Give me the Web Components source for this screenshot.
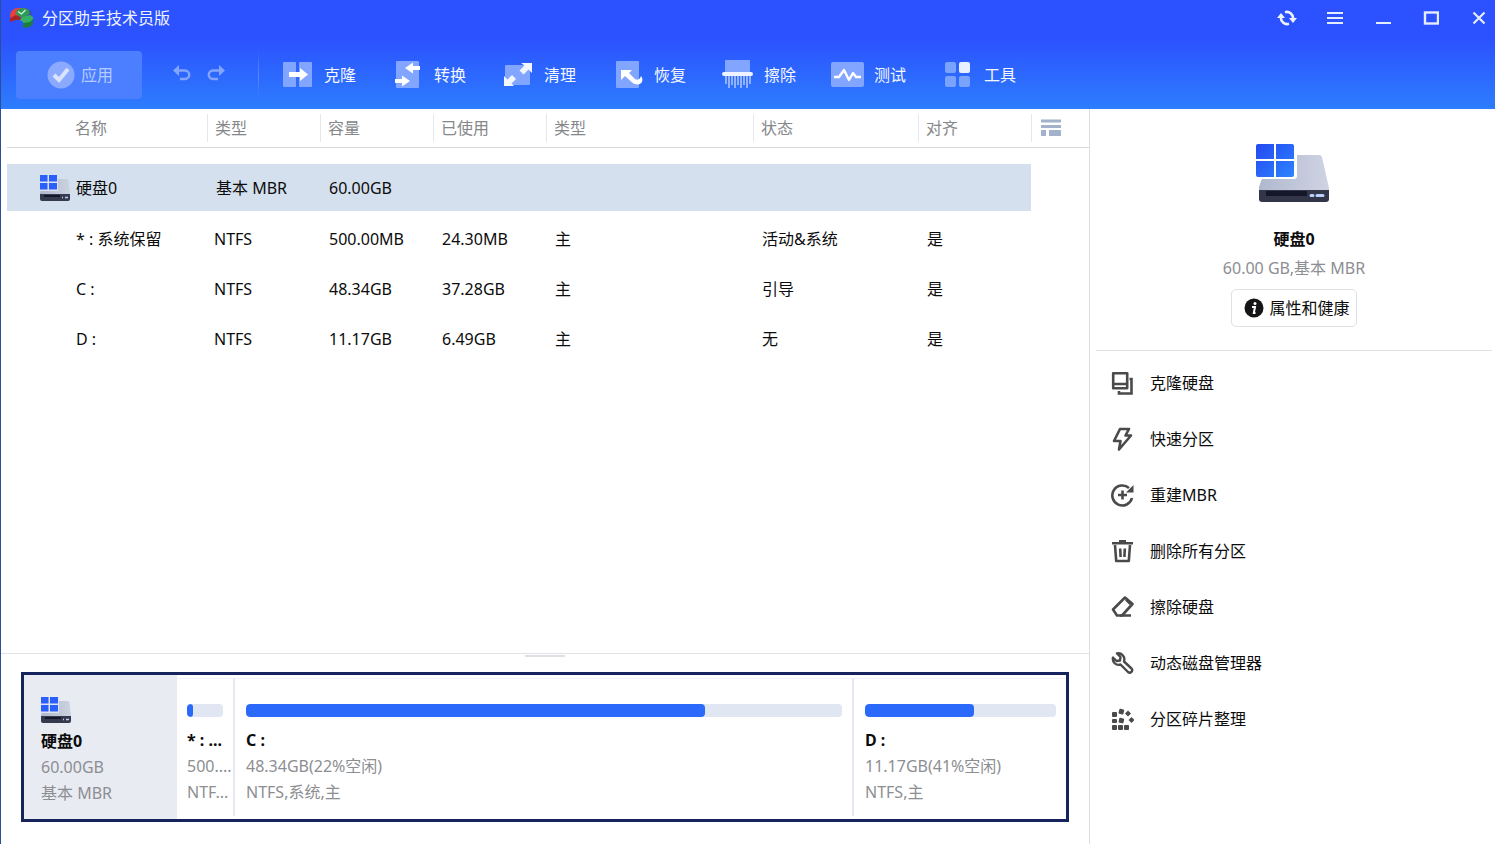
<!DOCTYPE html>
<html lang="zh-CN">
<head>
<meta charset="utf-8">
<title>分区助手技术员版</title>
<style>
  html, body { margin: 0; height: 100%; }
  body { font: 16px/26px "Noto Sans", "Noto Sans CJK SC", sans-serif; color: #0c0c0c; background: #fff; }
</style>
</head>
<body>
<app-window>
  <title-bar slot="top">分区助手技术员版</title-bar>
  <tool-bar slot="top">
    <tool-button icon="clone">克隆</tool-button>
    <tool-button icon="convert">转换</tool-button>
    <tool-button icon="clean">清理</tool-button>
    <tool-button icon="recover">恢复</tool-button>
    <tool-button icon="wipe">擦除</tool-button>
    <tool-button icon="test">测试</tool-button>
    <tool-button icon="tools">工具</tool-button>
  </tool-bar>
  <partition-table slot="main"></partition-table>
  <disk-map slot="main">
    <partition-block style="flex: 0 0 58px" used="16" name="* : ..." size="500...." kind="NTF..."></partition-block>
    <partition-block style="flex: 619 619 619px" used="77" name="C :" size="48.34GB(22%空闲)" kind="NTFS,系统,主"></partition-block>
    <partition-block style="flex: 212 212 212px" used="57" name="D :" size="11.17GB(41%空闲)" kind="NTFS,主"></partition-block>
  </disk-map>
  <side-panel slot="side">
    <action-item icon="copy">克隆硬盘</action-item>
    <action-item icon="bolt">快速分区</action-item>
    <action-item icon="rebuild">重建MBR</action-item>
    <action-item icon="trash">删除所有分区</action-item>
    <action-item icon="eraser">擦除硬盘</action-item>
    <action-item icon="wrench">动态磁盘管理器</action-item>
    <action-item icon="defrag">分区碎片整理</action-item>
  </side-panel>
</app-window>

<script>
const svg = (w, h, body) => `<svg width="${w}" height="${h}" viewBox="0 0 ${w} ${h}" fill="none" aria-hidden="true">${body}</svg>`;
const line = 'stroke="#4a4a4c" stroke-width="2.4" stroke-linejoin="round"';

const ICONS = {
  logo: svg(26, 22, `
    <path d="M1 9C1 4 5 1 9 1h8v6l-6 3-5 1-5 3z" fill="#e2443c"/><path d="M1 11l6-3 5 2-1 3H7l-6 2z" fill="#a8262b"/>
    <path d="M16 1c4 1 7 3 7 7l-6 1z" fill="#39539b"/>
    <path d="M8 3l5-2 6 1 2 4-5 4H11L7 7z" fill="#2f9a57"/>
    <path d="M13 10l8-2 3 2v6l-3 3-7 1v-5l-3-2z" fill="#35b062"/><path d="M14 16l7-1 3-3v5l-3 3-7 1z" fill="#1d7c41"/>
    <path d="M9 4.500l3.500 2.500 4-4" stroke="#c9f8d8" stroke-width="1.300"/>`),
  sync: svg(20, 16, `<path d="M8 2.2A6.2 6.2 0 0 1 16 9M12 13.8A6.2 6.2 0 0 1 4 7" stroke="#eef2ff" stroke-width="2.6"/><path d="M12 8h8l-4 5zM0 8h8L4 3z" fill="#eef2ff"/>`),
  menu: svg(16, 14, `<path d="M0 2h16M0 7h16M0 12h16" stroke="#e6ecff" stroke-width="2"/>`),
  min: svg(16, 14, `<path d="M1 12h15" stroke="#e6ecff" stroke-width="2"/>`),
  max: svg(16, 14, `<rect x="2" y="1.500" width="13" height="11" stroke="#e6ecff" stroke-width="2.400"/>`),
  close: svg(14, 14, `<path d="M1.5 1.5l11 11M12.5 1.5l-11 11" stroke="#e6ecff" stroke-width="2.2"/>`),
  check: svg(28, 28, `<circle cx="14" cy="14" r="13.5" fill="#8ba9ff"/><path d="M7 14l5 5 9-11" stroke="#dbe4ff" stroke-width="4"/>`),
  undo: svg(20, 16, `<path d="M4 5.5h9a4.2 4.2 0 0 1 0 8.5H8" stroke="#84a5ff" stroke-width="2.4"/><path d="M1 5.500L7 0v11z" fill="#84a5ff"/>`),
  redo: svg(20, 16, `<path d="M16 5.5H7a4.2 4.2 0 0 0 0 8.5h5" stroke="#84a5ff" stroke-width="2.4"/><path d="M19 5.500L13 0v11z" fill="#84a5ff"/>`),
  clone: svg(34, 30, `<path d="M2.500 2.500h12v24h-12zM18.500 2.500h12v24h-12z" fill="#82a5ff" stroke="#82a5ff" stroke-width="1" stroke-linejoin="round"/><path d="M8 12h11V8l8 6.500-8 6.500v-4H8z" fill="#fff"/>`),
  convert: svg(34, 30, `<rect x="5" y="1" width="23" height="27" rx="1" fill="#82a5ff"/><path d="M29 6v4h-7v3.500l-8-5.500 8-5.500V6zM4 19h7v-3.500l8 5.500-8 5.500V23H4z" fill="#fff"/>`),
  clean: svg(34, 30, `<rect x="4" y="5" width="25" height="20" rx="1" fill="#82a5ff"/><path d="M20 3h11v10l-3.500-3.500-5 5-4-4 5-5zM3 26V16l3.500 3.500 4.500-4.500 4 4-4.500 4.500L13 26z" fill="#f2f6ff"/>`),
  recover: svg(34, 30, `<rect x="5" y="1" width="23" height="27" rx="1" fill="#82a5ff"/><path d="M10 10l11 0-3 3 6 6c3 2 5 0 6-3 3 4 1 8-3 8.500-3 0-5-1-7-3l-6-5.500-4 4z" fill="#fff"/>`),
  wipe: svg(34, 30, `<path d="M4 1a1 1 0 0 1 1-1h23a1 1 0 0 1 1 1v12H4z" fill="#82a5ff"/><rect x="1" y="12" width="31" height="4" rx="2" fill="#eef3ff"/><path d="M5 16v8M8 16v12M11 16v9M14 16v12M17 16v9M20 16v12M23 16v9M26 16v12M29 16v8" stroke="#9dbaff" stroke-width="1.800"/>`),
  test: svg(34, 30, `<rect x="0" y="2" width="33" height="25" rx="2" fill="#82a5ff"/><path d="M3 17h5l5-7 5 10 4-7 3 4h5" stroke="#fff" stroke-width="2.400" stroke-linejoin="round"/>`),
  tools: svg(34, 30, `<g fill="#7aa3ff"><rect x="4" y="2" width="11" height="11" rx="2"/><rect x="4" y="16" width="11" height="11" rx="2"/><rect x="18" y="16" width="11" height="11" rx="2"/></g><rect x="18" y="2" width="11" height="11" rx="2" fill="#e9f0ff"/>`),
  columns: svg(20, 18, `<path d="M0 2h20M0 7.500h20" stroke="#a3b2cb" stroke-width="3"/><path d="M0 11h5v6H0zM8 11h12v6H8z" fill="#a3b2cb"/>`),
  info: svg(20, 20, `<circle cx="10" cy="10" r="9.500" fill="#151517"/><circle cx="11" cy="5.500" r="1.500" fill="#fff"/><path d="M8 9h3l-1.200 6h1.700" stroke="#fff" stroke-width="2"/>`),
  copy: svg(24, 24, `<path d="M3.200 2.200h14v15h-14zM3.200 13h14" stroke="#4a4a4c" stroke-width="2.600" stroke-linejoin="round"/><path d="M19.500 8h2v14.500H9V20" stroke="#4a4a4c" stroke-width="2.600"/>`),
  bolt: svg(24, 24, `<path d="M10 2h9l-3.500 6.500H21L9 22.500 10.500 14H4z" stroke="#4a4a4c" stroke-width="2.600" stroke-linejoin="round"/>`),
  rebuild: svg(24, 24, `<path d="M19 5A10 10 0 1 0 22 15M12.500 7.500v9M8 12h9" stroke="#4a4a4c" stroke-width="2.600"/><path d="M23.500 2v7.500H16z" fill="#4a4a4c"/>`),
  trash: svg(24, 24, `<path d="M2 4.200h21M9 2.200h7M5 6l1.200 16h12.600L20 6M10.200 9.500l.4 8.500M14.800 9.500l-.4 8.500" stroke="#4a4a4c" stroke-width="2.600" stroke-linejoin="round"/>`),
  eraser: svg(24, 24, `<path d="M3 14.500L15 2.500l7.500 6.500L12 20.500H7z" stroke="#4a4a4c" stroke-width="2.600" stroke-linejoin="round"/><path d="M10 20.500h11M16 4.500l4.500 4.500" stroke="#4a4a4c" stroke-width="2.600"/>`),
  wrench: svg(24, 24, `<path d="M7 2.500l3.500 3.500-.5 3.500-3.500.5L3 6.500C2 11 6 15 10.500 13.500l7.500 7.500c2.500 2 5.500-1 3.500-3.500L14 10.500C15.500 5.500 11.500 1.500 7 2.500z" ${line}/>`),
  defrag: svg(24, 24, `<g fill="#4a4a4c"><rect x="2" y="5" width="5" height="5" rx="1"/><rect x="2" y="12" width="5" height="4" rx="1"/><rect x="2" y="18" width="5" height="5" rx="1"/><rect x="8" y="18" width="5" height="5" rx="1"/><rect x="14" y="18" width="5" height="5" rx="1"/><rect x="9" y="11" width="5" height="5" rx="1" transform="rotate(12 11 13)"/><rect x="9" y="2" width="5" height="5" rx="1" transform="rotate(15 11 4)"/><path d="M18 3.500l3 3-3 3-3-3zM21.500 10l3 3-3 3-3-3z"/></g>`),
  diskLarge: svg(76, 60, `<defs><linearGradient id="t" x1="0" x2="1"><stop stop-color="#b0b8ce"/><stop offset="1" stop-color="#cfd4e3"/></linearGradient><linearGradient id="w" x2="1" y2="1"><stop stop-color="#2449f0"/><stop offset="1" stop-color="#2d84ff"/></linearGradient></defs>
    <path d="M14 12h49a3 3 0 0 1 3 2l7 31v3H3v-4z" fill="url(#t)"/>
    <path d="M3 47h70v9a3 3 0 0 1-3 3H6a3 3 0 0 1-3-3z" fill="#333649"/>
    <path d="M10 48h41v5H10z" fill="#141728"/><path d="M55 52.500h2M61 52.500h6" stroke="#bcd0ff" stroke-width="3" stroke-linecap="round"/>
    <path d="M0 0h41v33a3 3 0 0 1-3 3H0z" fill="#fff"/>
    <path d="M0 3a2 2 0 0 1 2-2h16v15H0zM20 1h16a2 2 0 0 1 2 2v13H20zM0 18h18v16H2a2 2 0 0 1-2-2zM20 18h18v14a2 2 0 0 1-2 2H20z" fill="url(#w)"/>`),
  diskSmall: svg(30, 26, `<defs><linearGradient id="s" x1="0" x2="1"><stop stop-color="#aeb7cc"/><stop offset="1" stop-color="#ccd3e0"/></linearGradient></defs>
    <path d="M4 4h23a2 2 0 0 1 1.500 1.500L30 18v2H0v-2z" fill="url(#s)"/><path d="M0 19h30v5a2 2 0 0 1-2 2H2a2 2 0 0 1-2-2z" fill="#363a4d"/>
    <path d="M4 20h16v2H4z" fill="#15182a"/><path d="M22 22.500h1M25 22.500h3" stroke="#b9cdff" stroke-width="1.500"/>
    <path d="M0 0h18v16H0z" fill="#dce3f0"/><path d="M0 0h7.500v6.500H0zM9 0h8v6.500H9zM0 8h7.500v6.500H0zM9 8h8v6.500H9z" fill="#2b5ffb"/>`)
};

function define(tag, css, render) {
  customElements.define(tag, class extends HTMLElement {
    constructor() {
      super();
      this.attachShadow({ mode: 'open' });
    }
    connectedCallback() {
      this.shadowRoot.innerHTML = `<style>*{box-sizing:border-box}${css}</style>${render(this)}`;
    }
  });
}

const resetButton = 'button{margin:0;padding:0;border:0;background:none;font:inherit;color:inherit;cursor:pointer}';

define('ui-icon', ':host{display:inline-flex;flex:none}svg{display:block}', el => ICONS[el.getAttribute('name')]);

define('app-window', `
  :host{display:flex;flex-direction:column;min-height:100vh;box-sizing:border-box;border-left:1px solid #2b4f96}
  header{background:linear-gradient(#2c52ff 36%,#2d7dfd)}
  .body{flex:1;display:flex}
  main{flex:1;min-width:0;display:flex;flex-direction:column}
  aside{flex:0 0 406px;border-left:1px solid #dcdde3}
`, () => `
  <header><slot name="top"></slot></header>
  <div class="body"><main><slot name="main"></slot></main><aside><slot name="side"></slot></aside></div>`);

define('title-bar', `${resetButton}
  :host{display:flex;align-items:center;height:36px;padding-left:8px;color:#eef2ff}
  h1{flex:1;margin:0 0 0 7px;font-size:16px;font-weight:400}
  nav{display:flex;gap:16px}
  button{width:32px;height:36px;display:flex;align-items:center;justify-content:center}
`, () => `
  <ui-icon name="logo"></ui-icon><h1><slot></slot></h1>
  <nav>
    <button aria-label="刷新"><ui-icon name="sync"></ui-icon></button>
    <button aria-label="菜单"><ui-icon name="menu"></ui-icon></button>
    <button aria-label="最小化"><ui-icon name="min"></ui-icon></button>
    <button aria-label="最大化"><ui-icon name="max"></ui-icon></button>
    <button aria-label="关闭"><ui-icon name="close"></ui-icon></button>
  </nav>`);

define('tool-bar', `${resetButton}
  :host{display:flex;align-items:center;height:69px;padding:4px 0 0 15px}
  .apply{width:126px;height:48px;border-radius:4px;background:#4c7fff;color:#b5caff;display:flex;align-items:center;justify-content:center;gap:6px;padding-left:2px}
  .history{display:flex;gap:14px;margin-left:30px}
  .history button{display:flex;height:20px}
  .rule{width:1px;height:48px;margin:0 22px 0 32px;background:linear-gradient(#4a6cff00,#5c86ff,#5c86ff00)}
`, () => `
  <button class="apply" disabled><ui-icon name="check"></ui-icon>应用</button>
  <div class="history">
    <button aria-label="撤销"><ui-icon name="undo"></ui-icon></button>
    <button aria-label="重做"><ui-icon name="redo"></ui-icon></button>
  </div>
  <div class="rule"></div>
  <slot></slot>`);

define('tool-button', `${resetButton}
  :host{display:block;width:110px}
  button{display:flex;align-items:center;gap:9px;height:48px;color:#f4f7ff}
`, el => `<button><ui-icon name="${el.getAttribute('icon')}"></ui-icon><span><slot></slot></span></button>`);

const COLUMNS = [['名称', 200], ['类型', 113], ['容量', 113], ['已使用', 113], ['类型', 207], ['状态', 165], ['对齐', 113]];
const ROWS = [
  ['* : 系统保留', 'NTFS', '500.00MB', '24.30MB', '主', '活动&amp;系统', '是'],
  ['C :', 'NTFS', '48.34GB', '37.28GB', '主', '引导', '是'],
  ['D :', 'NTFS', '11.17GB', '6.49GB', '主', '无', '是']
];

define('partition-table', `${resetButton}
  :host{display:block;flex:1;padding-left:6px}
  table{width:100%;table-layout:fixed;border-spacing:0}
  th,td{padding:0;text-align:left;font-weight:400;white-space:nowrap}
  th{height:39px;border-bottom:1px solid #d6d9dd;color:#85878a}
  th span{display:flex;align-items:center;height:28px;border-left:1px solid #e6e7ea;padding-left:7px}
  th:first-child span{border:0;padding-left:68px}
  th button{display:flex;margin-left:2px}
  td{height:50px;padding-left:9px}
  td:nth-child(2){padding-left:7px}
  td:first-child{padding-left:69px}
  .disk td{height:66px;border-top:16px solid transparent;border-bottom:3px solid transparent;background:#d5e0ef padding-box}
  .disk td:nth-child(2){padding-left:9px}
  .disk td:last-child{background:none}
  .disk td:first-child{padding-left:33px}
  .name{display:flex;align-items:center;gap:6px}
`, () => `
  <table>
    <colgroup>${COLUMNS.map(c => `<col style="width:${c[1]}px">`).join('')}<col></colgroup>
    <thead><tr>${COLUMNS.map(c => `<th scope="col"><span>${c[0]}</span></th>`).join('')}
      <th><span><button aria-label="选择列"><ui-icon name="columns"></ui-icon></button></span></th></tr></thead>
    <tbody>
      <tr class="disk"><td><div class="name"><ui-icon name="diskSmall"></ui-icon>硬盘0</div></td><td>基本 MBR</td><td>60.00GB</td><td></td><td></td><td></td><td></td><td></td></tr>
      ${ROWS.map(r => `<tr>${r.map(c => `<td>${c}</td>`).join('')}<td></td></tr>`).join('')}
    </tbody>
  </table>`);

define('disk-map', `
  :host{display:block;border-top:1px solid #e2e3e6;padding:0 20px 22px}
  .grip{width:40px;height:2px;margin:1px auto 15px;background:#dfe0e4}
  .map{display:flex;height:150px;border:3px solid #17235c}
  .disk{flex:0 0 153px;padding:22px 17px 0;background:#e9ebf3;color:#8c8e92}
  strong{display:block;color:#0c0c0c}
  ui-icon{display:flex;margin-bottom:5px}
`, () => `
  <div class="grip"></div>
  <div class="map">
    <div class="disk"><ui-icon name="diskSmall"></ui-icon><strong>硬盘0</strong><div>60.00GB</div><div>基本 MBR</div></div>
    <slot></slot>
  </div>`);

define('partition-block', `
  :host{display:block;min-width:0;box-sizing:border-box;margin:3px 0;padding:25px 0 0 11px;border-top:1px solid #f1f2f7;border-right:2px solid #e6e8f1;color:#8c8e92;white-space:nowrap;overflow:hidden}
  :host(:first-child){padding-left:10px}
  :host(:last-child){border-right:0}
  .bar{height:13px;margin:0 10px 10px 0;border-radius:4px;background:#e0e7f3;overflow:hidden}
  .fill{height:100%;border-radius:4px;background:#2b69fb}
  strong{display:block;color:#0c0c0c}
`, el => {
  const a = n => el.getAttribute(n);
  return `<div class="bar" role="meter" aria-label="已使用" aria-valuemin="0" aria-valuemax="100" aria-valuenow="${a('used')}"><div class="fill" style="width:${a('used')}%"></div></div>
  <strong>${a('name')}</strong><div>${a('size')}</div><div>${a('kind')}</div>`;
});

define('side-panel', `${resetButton}
  :host{display:block;padding:34px 3px 0 6px}
  .summary{display:flex;flex-direction:column;align-items:center;height:208px;border-bottom:1px solid #e2e3e6}
  h2{margin:23px 0 3px;font-size:16px;line-height:26px}
  p{margin:0 0 8px;color:#8c8e92}
  .summary button{display:flex;align-items:center;justify-content:center;gap:5px;width:126px;height:38px;padding-left:6px;border:1px solid #e0e1e5;border-radius:5px}
  .actions{padding-top:4px}
`, () => `
  <div class="summary">
    <ui-icon name="diskLarge"></ui-icon><h2>硬盘0</h2><p>60.00 GB,基本 MBR</p>
    <button><ui-icon name="info"></ui-icon>属性和健康</button>
  </div>
  <div class="actions"><slot></slot></div>`);

define('action-item', `${resetButton}
  :host{display:block}
  button{display:flex;align-items:center;gap:16px;width:100%;height:56px;padding-left:14px;text-align:left}
`, el => `<button><ui-icon name="${el.getAttribute('icon')}"></ui-icon><span><slot></slot></span></button>`);
</script>
</body>
</html>
